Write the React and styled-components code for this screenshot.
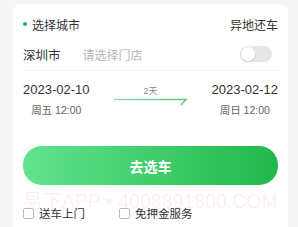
import React from "react";
import styled, { createGlobalStyle } from "styled-components";

const Global = createGlobalStyle`
  html, body { margin: 0; padding: 0; background: #f5f5f5; }
  body { font-family: "Liberation Sans", "Noto Sans CJK SC", sans-serif; }
`;

const Page = styled.div`
  width: 298px;
  height: 227px;
  box-sizing: border-box;
  padding: 4px 10px 0 13px;
  overflow: hidden;
  background: #f5f5f5;
`;

const Card = styled.div`
  position: relative;
  background: #fff;
  border-radius: 8px 8px 0 0;
  padding: 10px 10px 20px 10px;
  display: flex;
  flex-direction: column;
`;

const Row = styled.div`
  display: flex;
  align-items: center;
  justify-content: space-between;
  height: 20px;
  margin-top: ${(p) => p.$mt || 0}px;
`;

const Label = styled.div`
  display: flex;
  align-items: center;
  gap: 5px;
  font-size: 12px;
  color: ${(p) => p.$color || "#333"};
`;

const Dot = styled.span`
  width: 4px;
  height: 4px;
  border-radius: 50%;
  background: #1fb548;
  margin-left: 0px;
`;

const Left = styled.div`
  display: flex;
  align-items: center;
  gap: 22px;
`;

const City = styled.span`
  font-size: 12.5px;
  color: #333;
`;

const Placeholder = styled.span`
  font-size: 12px;
  color: #b5b5b5;
`;

const Toggle = styled.div`
  width: 32px;
  height: 16px;
  border-radius: 8px;
  background: #e6e6e6;
  margin-right: 6px;
  display: flex;
  align-items: center;
  padding: 1px;
  box-sizing: border-box;
`;

const Knob = styled.span`
  width: 14px;
  height: 14px;
  border-radius: 50%;
  background: #fff;
  box-shadow: 0 1px 2px rgba(0, 0, 0, 0.15);
`;

const Divider = styled.div`
  height: 1px;
  background: #f0f0f0;
  margin-top: 6px;
`;

const DateGrid = styled.div`
  display: grid;
  grid-template-columns: 1fr auto 1fr;
  align-items: start;
  margin-top: 10px;
`;

const DateBlock = styled.div`
  display: flex;
  flex-direction: column;
  align-items: center;
  justify-self: ${(p) => (p.$right ? "end" : "start")};
  gap: 4px;
`;

const DateText = styled.div`
  font-size: 13px;
  line-height: 18px;
  color: #333;
`;

const Week = styled.div`
  font-size: 10.5px;
  line-height: 14px;
  color: #666;
`;

const Middle = styled.div`
  display: flex;
  flex-direction: column;
  align-items: center;
  padding-top: 5px;
`;

const Days = styled.div`
  font-size: 9px;
  line-height: 11px;
  color: #888;
  margin-bottom: 1px;
`;

const Button = styled.button`
  margin-top: 29px;
  height: 39px;
  border: none;
  border-radius: 19px;
  background: linear-gradient(90deg, #62e38e 0%, #21b84a 100%);
  color: #fff;
  font-family: "Liberation Sans", "Noto Sans CJK SC", sans-serif;
  font-size: 14px;
  font-weight: 700;
  padding: 0;
`;

const Options = styled.div`
  display: flex;
  align-items: center;
  height: 16px;
  margin-top: 20px;
  gap: 34px;
`;

const Option = styled.label`
  display: flex;
  align-items: center;
  gap: 5px;
  font-size: 11.5px;
  color: #333;
`;

const Box = styled.span`
  width: 9px;
  height: 9px;
  border: 1px solid #bdbdbd;
  border-radius: 2px;
  background: #fff;
`;

const Watermark = styled.div`
  position: absolute;
  left: 10px;
  top: 185px;
  font-size: 19.5px;
  line-height: 24px;
  color: rgba(255, 60, 170, 0.1);
  white-space: nowrap;
  pointer-events: none;
`;

function Arrow() {
  return (
    <svg width="73" height="9" viewBox="0 0 73 9">
      <defs>
        <linearGradient id="lg" x1="0" x2="1" y1="0" y2="0">
          <stop offset="0" stopColor="#8fdcaa" />
          <stop offset="1" stopColor="#5cc982" />
        </linearGradient>
      </defs>
      <path d="M0 1.5 H72 L67 7" fill="none" stroke="url(#lg)" strokeWidth="1.4" />
    </svg>
  );
}

export default function App() {
  return (
    <Page>
      <Global />
      <Card>
        <Row>
          <Label>
            <Dot />
            选择城市
          </Label>
          <Label>异地还车</Label>
        </Row>
        <Row $mt={10}>
          <Left>
            <City>深圳市</City>
            <Placeholder>请选择门店</Placeholder>
          </Left>
          <Toggle>
            <Knob />
          </Toggle>
        </Row>
        <Divider />
        <DateGrid>
          <DateBlock>
            <DateText>2023-02-10</DateText>
            <Week>周五 12:00</Week>
          </DateBlock>
          <Middle>
            <Days>2天</Days>
            <Arrow />
          </Middle>
          <DateBlock $right>
            <DateText>2023-02-12</DateText>
            <Week>周日 12:00</Week>
          </DateBlock>
        </DateGrid>
        <Button>去选车</Button>
        <Options>
          <Option>
            <Box />
            送车上门
          </Option>
          <Option>
            <Box />
            免押金服务
          </Option>
        </Options>
        <Watermark>易下APP • 4008891800.COM</Watermark>
      </Card>
    </Page>
  );
}
